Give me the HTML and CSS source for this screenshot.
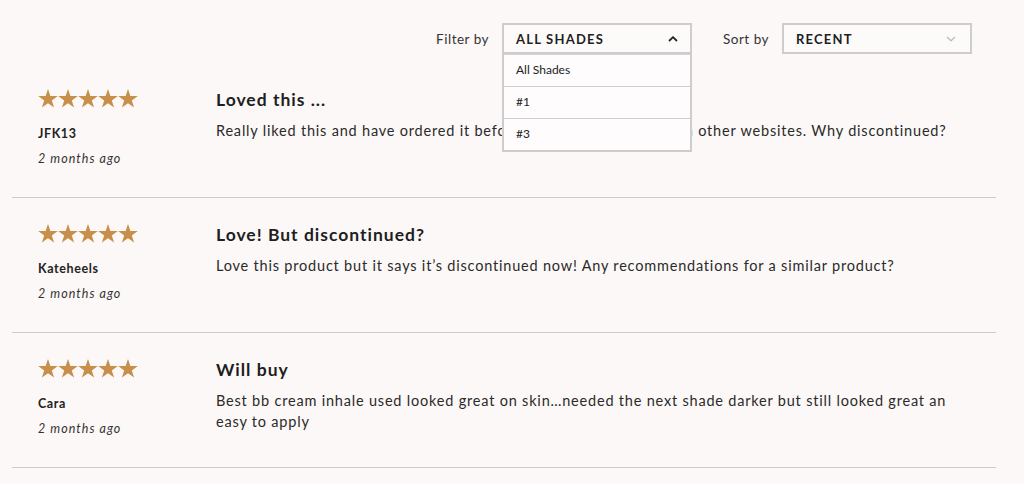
FILE: index.html
```html
<!DOCTYPE html>
<html lang="en">
<head>
<meta charset="utf-8">
<title>Reviews</title>
<link rel="stylesheet" href="styles.css">
</head>
<body>
<div class="page">
  <div class="toolbar">
    <div class="control">
      <span class="label">Filter by</span>
      <div class="select open">
        <div class="select-head">
          <span class="select-value">ALL SHADES</span>
          <svg class="chev up" viewBox="0 0 10 6" width="10" height="6"><path d="M1 5 L5 1.2 L9 5" fill="none" stroke="#222" stroke-width="1.8"/></svg>
        </div>
        <ul class="options">
          <li>All Shades</li>
          <li>#1</li>
          <li>#3</li>
        </ul>
      </div>
    </div>
    <div class="control sort">
      <span class="label">Sort by</span>
      <div class="select">
        <div class="select-head">
          <span class="select-value">RECENT</span>
          <svg class="chev" viewBox="0 0 10 6" width="10" height="6"><path d="M1 1 L5 4.8 L9 1" fill="none" stroke="#bbb" stroke-width="1.2"/></svg>
        </div>
      </div>
    </div>
  </div>

  <div class="reviews">
    <div class="review">
      <div class="meta">
        <div class="stars">
          <svg viewBox="0 0 100 19" width="100" height="19"><g fill="#c88f4b"><polygon id="s" points="10,0 12.35,7.1 19.8,7.1 13.8,11.5 16.1,18.6 10,14.2 3.9,18.6 6.2,11.5 0.2,7.1 7.65,7.1"/><use href="#s" x="20"/><use href="#s" x="40"/><use href="#s" x="60"/><use href="#s" x="80"/></g></svg>
        </div>
        <div class="name">JFK13</div>
        <div class="date">2 months ago</div>
      </div>
      <div class="content">
        <h3 class="title">Loved this ...</h3>
        <p class="body">Really liked this and have ordered it before and now can’t find it on other websites. Why discontinued?</p>
      </div>
    </div>
    <div class="review">
      <div class="meta">
        <div class="stars">
          <svg viewBox="0 0 100 19" width="100" height="19"><g fill="#c88f4b"><polygon id="s2" points="10,0 12.35,7.1 19.8,7.1 13.8,11.5 16.1,18.6 10,14.2 3.9,18.6 6.2,11.5 0.2,7.1 7.65,7.1"/><use href="#s2" x="20"/><use href="#s2" x="40"/><use href="#s2" x="60"/><use href="#s2" x="80"/></g></svg>
        </div>
        <div class="name">Kateheels</div>
        <div class="date">2 months ago</div>
      </div>
      <div class="content">
        <h3 class="title">Love! But discontinued?</h3>
        <p class="body">Love this product but it says it’s discontinued now! Any recommendations for a similar product?</p>
      </div>
    </div>
    <div class="review">
      <div class="meta">
        <div class="stars">
          <svg viewBox="0 0 100 19" width="100" height="19"><g fill="#c88f4b"><polygon id="s3" points="10,0 12.35,7.1 19.8,7.1 13.8,11.5 16.1,18.6 10,14.2 3.9,18.6 6.2,11.5 0.2,7.1 7.65,7.1"/><use href="#s3" x="20"/><use href="#s3" x="40"/><use href="#s3" x="60"/><use href="#s3" x="80"/></g></svg>
        </div>
        <div class="name">Cara</div>
        <div class="date">2 months ago</div>
      </div>
      <div class="content">
        <h3 class="title">Will buy</h3>
        <p class="body">Best bb cream inhale used looked great on skin…needed the next shade darker but still looked great an easy to apply</p>
      </div>
    </div>
  </div>
</div>
</body>
</html>
```

FILE: styles.css
```css
* { box-sizing: border-box; }
html, body {
  margin: 0;
  padding: 0;
  background: #fcf8f7;
}
body {
  font-family: "Lato", "Noto Sans", sans-serif;
  color: #222;
  width: 1024px;
  height: 484px;
  overflow: hidden;
}
.toolbar {
  height: 63px;
  display: flex;
  justify-content: flex-end;
  align-items: flex-start;
  padding: 23px 52px 0 0;
  gap: 31px;
}
.control {
  display: flex;
  align-items: center;
  gap: 13px;
  position: relative;
}
.label {
  font-size: 13.5px;
  color: #333;
  letter-spacing: 0.5px;
}
.select {
  width: 190px;
  position: relative;
}
.select-head {
  height: 31px;
  border: 2px solid #d0cccb;
  display: flex;
  align-items: center;
  justify-content: space-between;
  padding: 0 12px 0 12px;
  background: #fdfafa;
}
.sort .select-head { padding-right: 14px; }
.select-value {
  font-size: 13px;
  font-weight: 700;
  letter-spacing: 1.2px;
  color: #1f1f1f;
}
.chev { display: block; }
.options {
  position: absolute;
  top: 31px;
  left: 0;
  width: 190px;
  margin: 0;
  padding: 0;
  list-style: none;
  background: #fefcfc;
  border: 2px solid #d0cccb;
  border-top: none;
  z-index: 5;
}
.options li {
  height: 32px;
  display: flex;
  align-items: center;
  padding-left: 12px;
  font-size: 12px;
  color: #222;
  border-top: 1px solid #d0cccb;
  padding-bottom: 2px;
}
.options li:first-child { border-top: 1px solid #d8d4d3; }
.reviews {
  margin: 0 28px 0 12px;
}
.review {
  display: flex;
  height: 135px;
  padding-top: 25px;
  border-bottom: 1.5px solid #cfcbca;
}
.meta {
  width: 204px;
  padding-left: 26px;
  flex-shrink: 0;
}
.stars { height: 19px; margin-top: 1px; }
.stars svg { display: block; }
.name {
  margin-top: 18px;
  font-size: 12.5px;
  font-weight: 700;
  color: #222;
  letter-spacing: 0.6px;
}
.date {
  margin-top: 10px;
  font-size: 12.5px;
  font-style: italic;
  color: #333;
  letter-spacing: 1.05px;
}
.content { flex: 1; padding-right: 40px; }
.title {
  margin: 2px 0 0;
  font-size: 17.5px;
  font-weight: 700;
  line-height: 20px;
  color: #1e1e1e;
  letter-spacing: 1px;
}
.body {
  margin: 10px 0 0;
  font-size: 14.5px;
  line-height: 21px;
  color: #2a2a2a;
  letter-spacing: 0.8px;
}
```
